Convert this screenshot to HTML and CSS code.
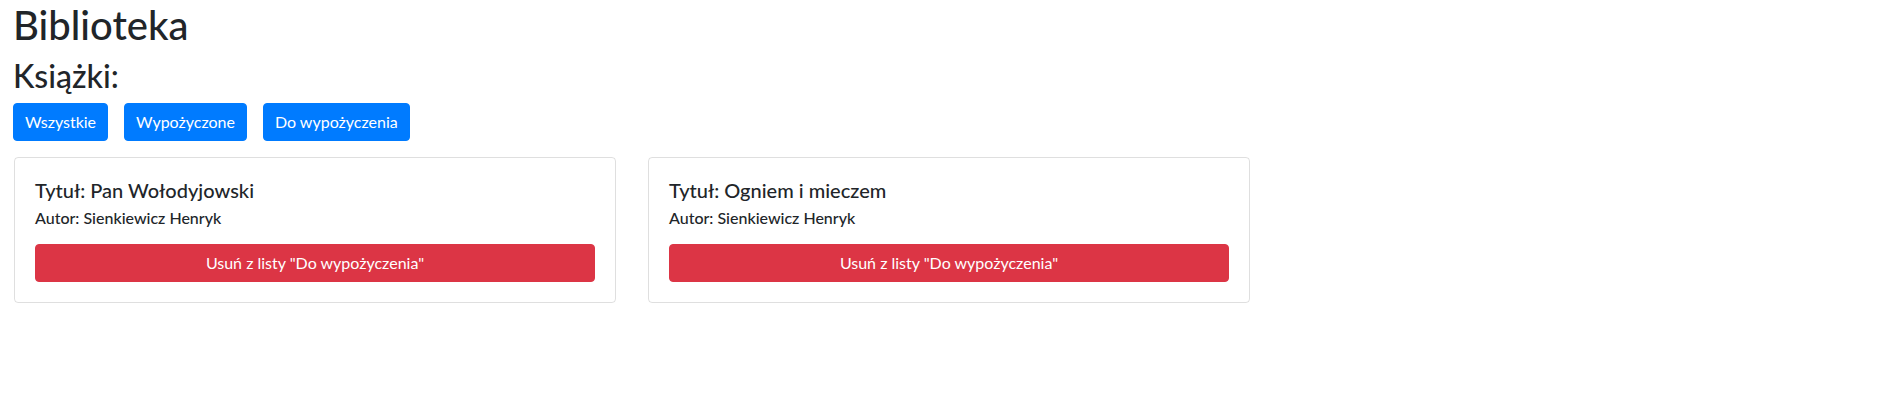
FILE: index.html
```html
<!DOCTYPE html>
<html lang="pl">
<head>
<meta charset="utf-8">
<title>Biblioteka</title>
<link rel="stylesheet" href="styles.css">
</head>
<body>
<main class="page">
  <h1 class="title">Biblioteka</h1>
  <h2 class="subtitle">Książki:</h2>
  <div class="filters">
    <button class="btn btn-primary">Wszystkie</button>
    <button class="btn btn-primary">Wypożyczone</button>
    <button class="btn btn-primary">Do wypożyczenia</button>
  </div>
  <div class="cards">
    <div class="card">
      <h5 class="card-title">Tytuł: Pan Wołodyjowski</h5>
      <h6 class="card-subtitle">Autor: Sienkiewicz Henryk</h6>
      <button class="btn btn-danger btn-block">Usuń z listy "Do wypożyczenia"</button>
    </div>
    <div class="card">
      <h5 class="card-title">Tytuł: Ogniem i mieczem</h5>
      <h6 class="card-subtitle">Autor: Sienkiewicz Henryk</h6>
      <button class="btn btn-danger btn-block">Usuń z listy "Do wypożyczenia"</button>
    </div>
  </div>
</main>
</body>
</html>
```

FILE: styles.css
```css
* { box-sizing: border-box; }
html, body { margin: 0; background: #fff; }
body {
  font-family: Lato, "Open Sans", sans-serif;
  color: #212529;
  font-size: 16px;
  line-height: 1.5;
}
.page {
  padding: 1px 13px 0;
}
h1, h2, h5, h6 { font-weight: 500; margin: 0; }
.title {
  font-size: 40px;
  line-height: 48px;
  margin-bottom: 8px;
}
.subtitle {
  font-size: 32px;
  line-height: 38.4px;
  margin-bottom: 8px;
}
.filters {
  display: flex;
  gap: 16px;
}
.btn {
  font-family: inherit;
  font-size: 16px;
  line-height: 24px;
  padding: 6px 11px;
  border: 1px solid transparent;
  border-radius: 4px;
  color: #fff;
  cursor: pointer;
}
.btn-primary { background: #007bff; border-color: #007bff; }
.btn-danger { background: #dc3545; border-color: #dc3545; }
.btn-block { display: block; width: 100%; }
.cards {
  display: flex;
  gap: 32px;
  margin-top: 16px;
  padding-left: 1px;
}
.card {
  width: 602px;
  border: 1px solid rgba(0, 0, 0, 0.125);
  border-radius: 4px;
  padding: 20px;
}
.card-title {
  font-size: 20px;
  line-height: 24px;
  margin-bottom: 6px;
}
.card-subtitle {
  font-size: 16px;
  line-height: 19.2px;
  margin-bottom: 16px;
}
```
